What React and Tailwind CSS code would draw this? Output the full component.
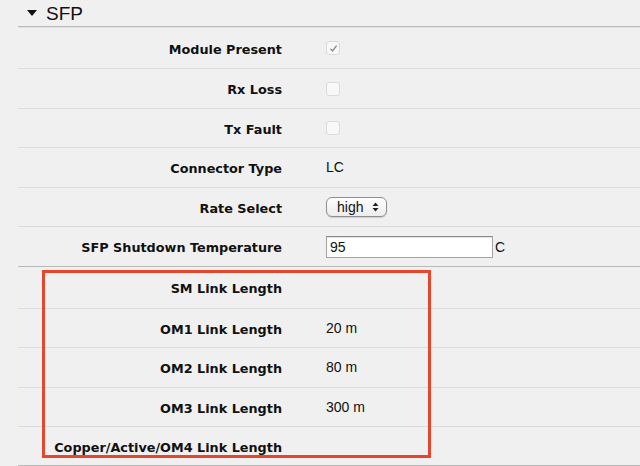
import React from "react";

const group1 = [
  { label: "Module Present", h: "h-[41px]", kind: "checked" },
  { label: "Rx Loss", h: "h-[40px]", kind: "checkbox" },
  { label: "Tx Fault", h: "h-[39px]", kind: "checkbox" },
  { label: "Connector Type", h: "h-[40px]", kind: "text", value: "LC" },
  { label: "Rate Select", h: "h-[39px]", kind: "select" },
  { label: "SFP Shutdown Temperature", h: "h-[40px]", kind: "input", last: true },
];

const group2 = [
  { label: "SM Link Length", h: "h-[42px]", kind: "text", value: "" },
  { label: "OM1 Link Length", h: "h-[39px]", kind: "text", value: "20 m" },
  { label: "OM2 Link Length", h: "h-[40px]", kind: "text", value: "80 m" },
  { label: "OM3 Link Length", h: "h-[39px]", kind: "text", value: "300 m" },
  { label: "Copper/Active/OM4 Link Length", h: "h-[39px]", kind: "text", value: "", last: true },
];

function Checkbox({ checked }) {
  return (
    <div className="w-[14px] h-[14px] rounded-[3px] border border-[#dadada] bg-[#f8f8f8] flex items-center justify-center">
      {checked && (
        <svg width="9" height="9" viewBox="0 0 9 9">
          <path d="M1.5 4.8 L3.6 7 L7.6 1.6" fill="none" stroke="#8c8c8c" strokeWidth="1.4" />
        </svg>
      )}
    </div>
  );
}

function Select() {
  return (
    <div className="w-[61px] h-[20px] rounded-[6px] border border-[#8e8e8e] bg-gradient-to-b from-[#ffffff] to-[#ececec] shadow-[0_1px_1px_rgba(0,0,0,0.15)] flex items-center pl-[10px] pr-[7px] justify-between">
      <span className="text-[14px] leading-none text-[#111]">high</span>
      <svg width="7" height="10" viewBox="0 0 7 10">
        <path d="M3.5 0.5 L6.5 4 L0.5 4 Z" fill="#222" />
        <path d="M3.5 9.5 L6.5 6 L0.5 6 Z" fill="#222" />
      </svg>
    </div>
  );
}

function Input() {
  return (
    <div className="flex items-center">
      <div className="w-[167px] h-[22px] bg-white border border-[#a4a4a4] border-t-[#8a8a8a] shadow-[inset_0_1px_1px_rgba(0,0,0,0.12)] flex items-center pl-[3px]">
        <span className="text-[14px] leading-none text-[#111]">95</span>
      </div>
      <span className="ml-[2px] text-[14px] leading-none text-[#111]">C</span>
    </div>
  );
}

function Row({ row }) {
  const border = row.last ? "border-[#b9b9b9]" : "border-[#dcdcdc]";
  return (
    <div className={`flex items-center border-b ${border} ${row.h}`}>
      <div className="w-[264px] pt-[3px] text-right font-bold text-[12.8px] text-[#111]" style={{ fontFamily: '"DejaVu Sans", Verdana, sans-serif' }}>
        {row.label}
      </div>
      <div className="pl-[44px] flex items-center">
        {row.kind === "checked" && <Checkbox checked />}
        {row.kind === "checkbox" && <Checkbox />}
        {row.kind === "text" && <span className="text-[14px] text-[#111]">{row.value}</span>}
        {row.kind === "select" && <Select />}
        {row.kind === "input" && <Input />}
      </div>
    </div>
  );
}

export default function App() {
  return (
    <div className="relative w-[640px] h-[466px] overflow-hidden bg-[#f0f0f0]" style={{ fontFamily: '"Liberation Sans", Arial, sans-serif' }}>
      <div className="h-[27px] ml-[18px] border-b border-[#b9b9b9] flex items-center">
        <svg className="ml-[9px]" width="10" height="6" viewBox="0 0 10 6">
          <path d="M0 0 L10 0 L5 6 Z" fill="#111" />
        </svg>
        <span className="ml-[9px] text-[19px] leading-none text-[#111]">SFP</span>
      </div>
      <div className="ml-[18px] h-[1px] bg-[#e3e3e3]" />
      <div className="ml-[18px]">
        {group1.map((r) => (
          <Row key={r.label} row={r} />
        ))}
        {group2.map((r) => (
          <Row key={r.label} row={r} />
        ))}
      </div>
      <div className="absolute left-[42px] top-[270px] w-[389px] h-[188px] border-[3px] border-[#e4472c] pointer-events-none" />
    </div>
  );
}
